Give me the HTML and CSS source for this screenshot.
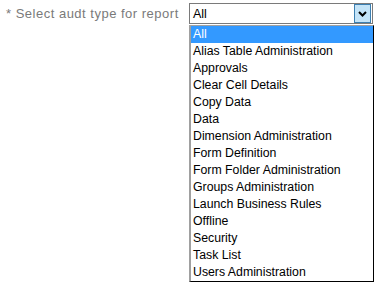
FILE: index.html
```html
<!DOCTYPE html>
<html>
<head>
<meta charset="utf-8">
<link rel="stylesheet" href="styles.css">
</head>
<body>
<div class="row">
  <label class="label">* Select audt type for report</label>
  <div class="combo">
    <div class="select">
      <span class="value">All</span>
      <span class="btn"><svg width="9" height="6" viewBox="0 0 9 6"><path d="M1 1 L4.5 4.5 L8 1" fill="none" stroke="#000" stroke-width="2"/></svg></span>
    </div>
    <ul class="list">
      <li class="sel">All</li>
      <li>Alias Table Administration</li>
      <li>Approvals</li>
      <li>Clear Cell Details</li>
      <li>Copy Data</li>
      <li>Data</li>
      <li>Dimension Administration</li>
      <li>Form Definition</li>
      <li>Form Folder Administration</li>
      <li>Groups Administration</li>
      <li>Launch Business Rules</li>
      <li>Offline</li>
      <li>Security</li>
      <li>Task List</li>
      <li>Users Administration</li>
    </ul>
  </div>
</div>
</body>
</html>
```
FILE: styles.css
```css
html, body {
  margin: 0;
  padding: 0;
  background: #fff;
}
body {
  font-family: "Liberation Sans", Arial, sans-serif;
  font-size: 13px;
}
.row {
  display: flex;
  align-items: flex-start;
  padding: 3px 0 0 6px;
}
.label {
  color: #7a7a7a;
  width: 183px;
  line-height: 21px;
  letter-spacing: 0.5px;
  white-space: nowrap;
}
.combo {
  display: flex;
  flex-direction: column;
}
.select {
  width: 182px;
  height: 19px;
  border: 1px solid #7a7a7a;
  display: flex;
  align-items: center;
  justify-content: space-between;
  box-sizing: content-box;
  font-size: 12.5px;
}
.value {
  padding-left: 3px;
  color: #000;
}
.btn {
  width: 15px;
  height: 17px;
  margin-right: 1px;
  background: #c4e4f8;
  border: 1px solid #3c7fb1;
  display: flex;
  align-items: center;
  justify-content: center;
}
.list {
  list-style: none;
  margin: 1px 0 0 0;
  padding: 0;
  width: 182px;
  border-left: 2px solid #a0a0a0;
  border-top: 1px solid #a0a0a0;
  border-right: 1px solid #000;
  border-bottom: 1px solid #000;
  font-size: 12.3px;
}
.list li {
  height: 17px;
  line-height: 17px;
  padding-left: 2px;
  color: #000;
  white-space: nowrap;
}
.list li.sel {
  background: #3399ff;
  color: #fff;
}
```
